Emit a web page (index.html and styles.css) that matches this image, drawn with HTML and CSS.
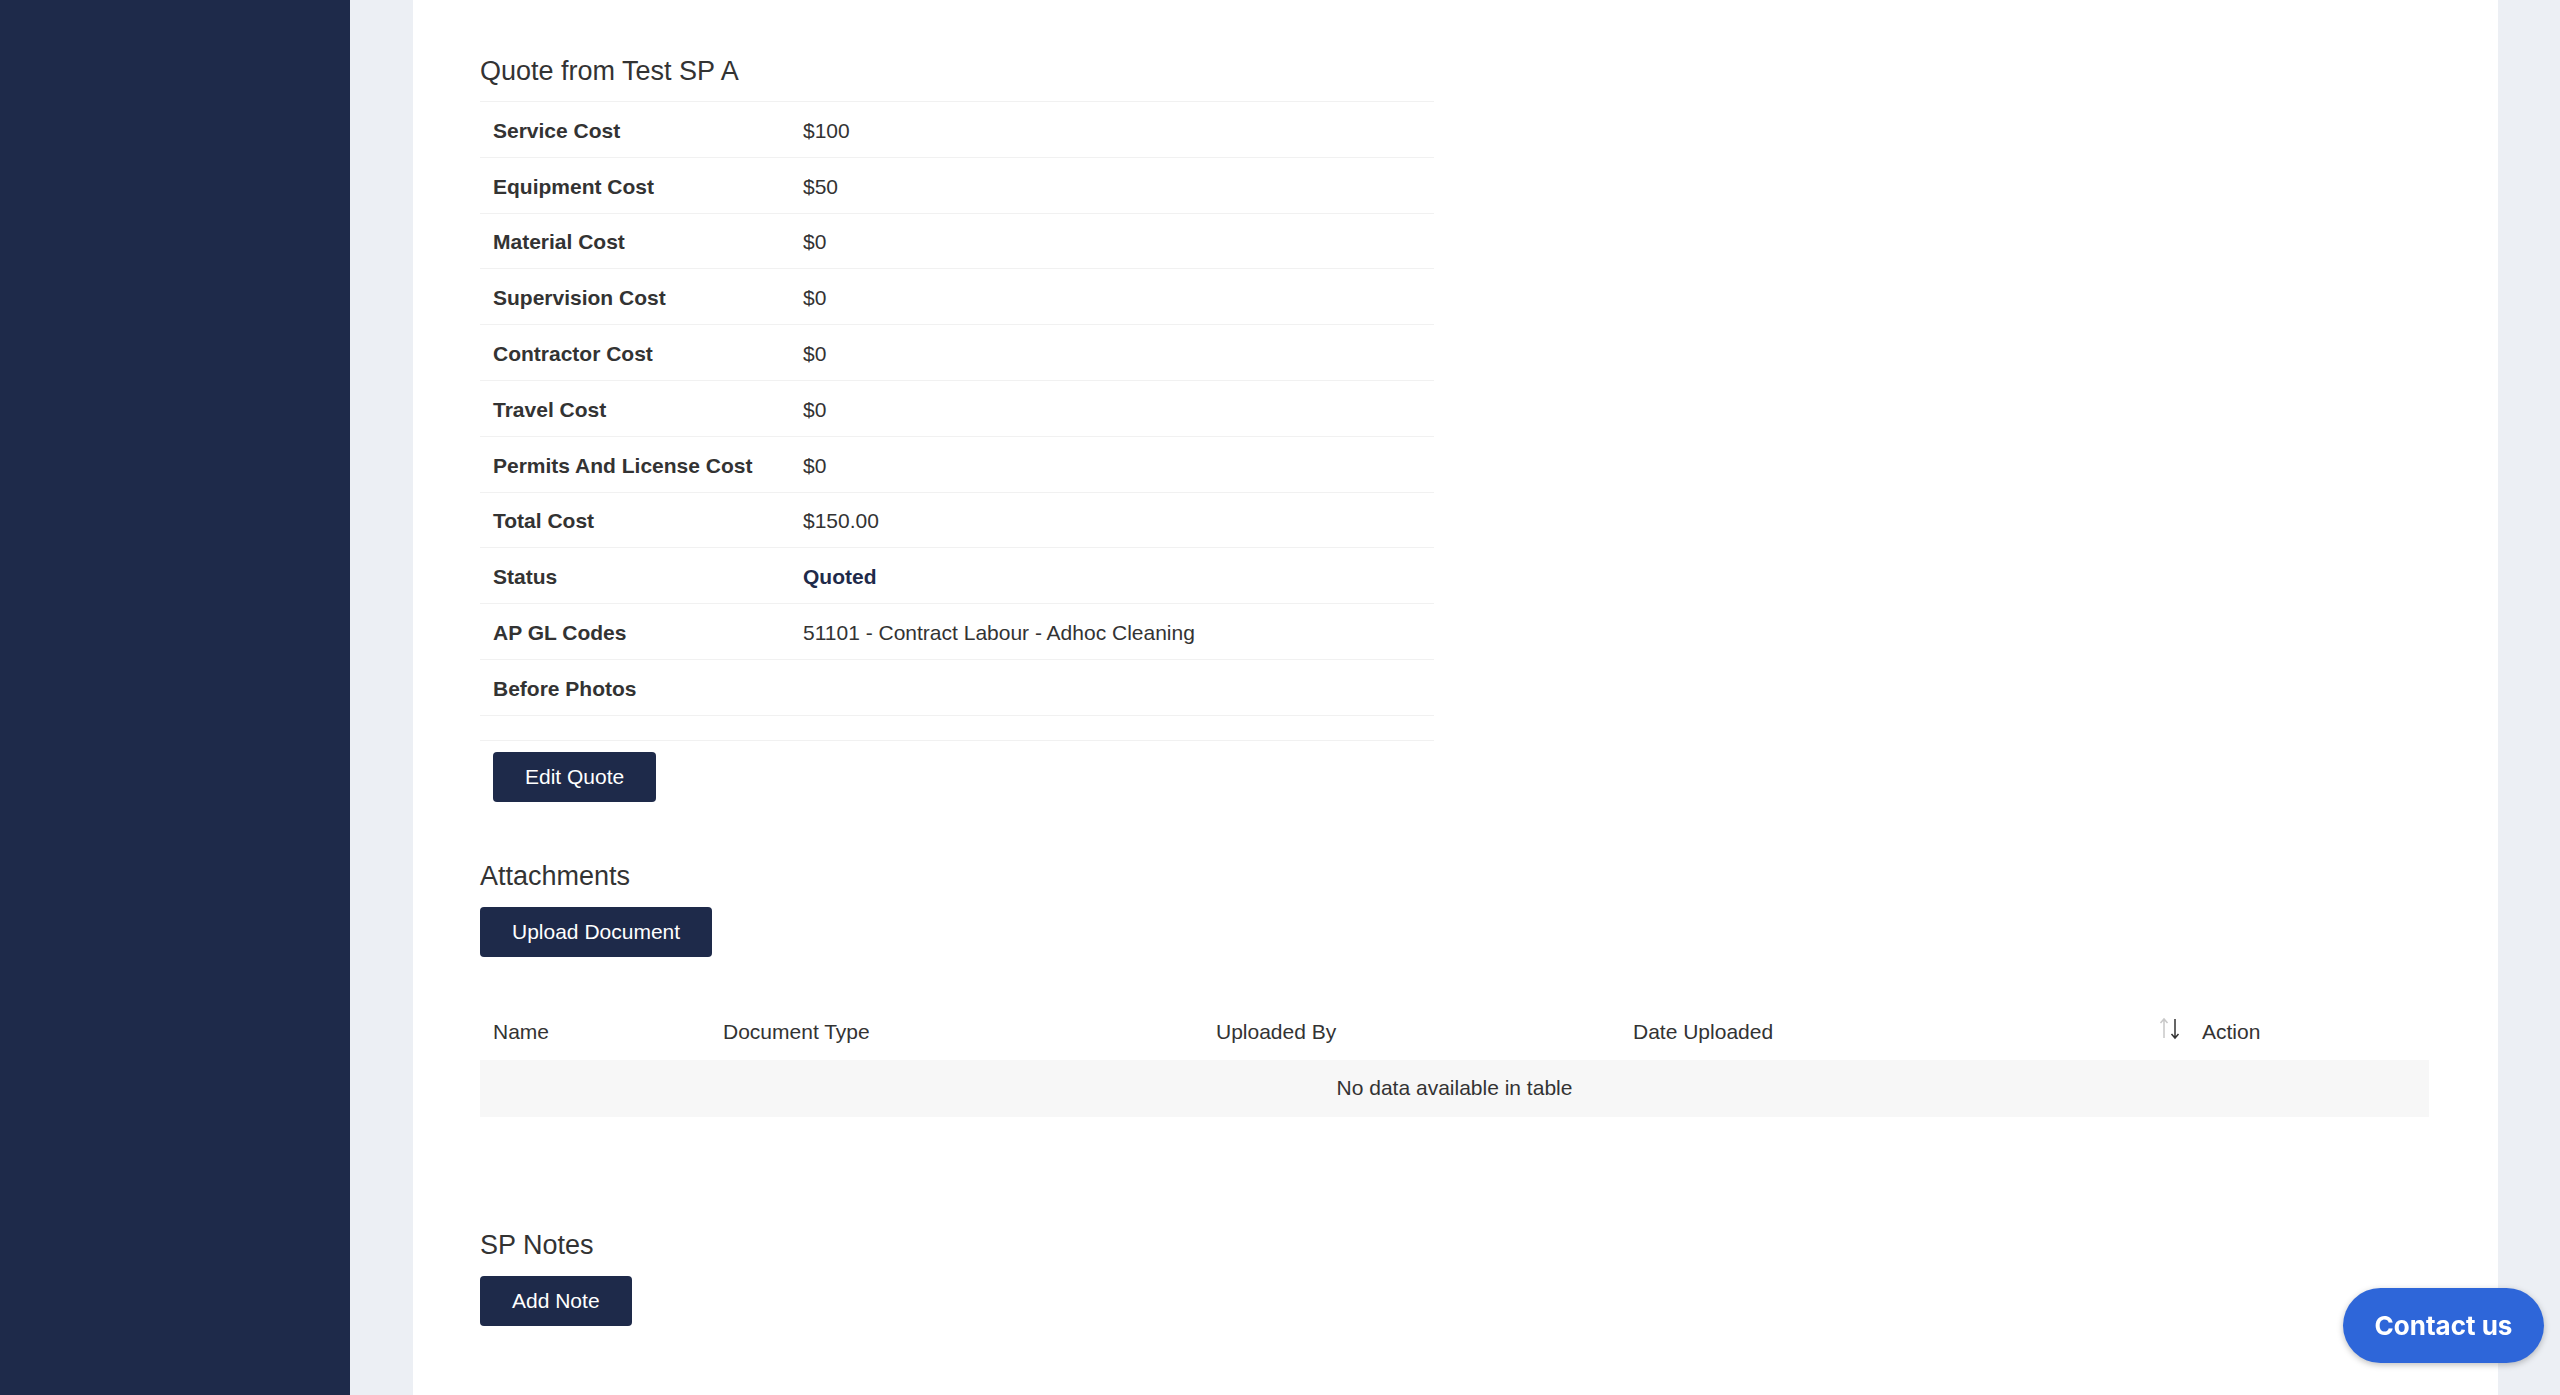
FILE: index.html
```html
<!DOCTYPE html>
<html lang="en">
<head>
    <meta charset="UTF-8">
    <meta name="viewport" content="width=device-width, initial-scale=1.0">
    <title>Quote Details</title>
    <link rel="stylesheet" href="styles.css">
</head>
<body>
    <div class="sidebar"></div>

    <div class="main">
        <div class="card">
            <h4 class="section-title first">Quote from Test SP A</h4>
            <table class="quote-table">
                <tr><td class="label">Service Cost</td><td>$100</td></tr>
                <tr><td class="label">Equipment Cost</td><td>$50</td></tr>
                <tr><td class="label">Material Cost</td><td>$0</td></tr>
                <tr><td class="label">Supervision Cost</td><td>$0</td></tr>
                <tr><td class="label">Contractor Cost</td><td>$0</td></tr>
                <tr><td class="label">Travel Cost</td><td>$0</td></tr>
                <tr><td class="label">Permits And License Cost</td><td>$0</td></tr>
                <tr><td class="label">Total Cost</td><td>$150.00</td></tr>
                <tr><td class="label">Status</td><td class="status">Quoted</td></tr>
                <tr><td class="label">AP GL Codes</td><td>51101 - Contract Labour - Adhoc Cleaning</td></tr>
                <tr><td class="label">Before Photos</td><td></td></tr>
                <tr class="spacer"><td></td><td></td></tr>
            </table>
            <button class="btn btn-edit">Edit Quote</button>

            <h4 class="section-title attach">Attachments</h4>
            <button class="btn">Upload Document</button>

            <table class="docs-table">
                <thead>
                    <tr>
                        <th class="col-name">Name</th>
                        <th class="col-type">Document Type</th>
                        <th class="col-by">Uploaded By</th>
                        <th class="col-date">Date Uploaded
                            <svg class="sort-icon" width="22" height="26" viewBox="0 0 22 26">
                                <path d="M5 22V3M1.5 7L5 3l3.5 4" fill="none" stroke="#c8c8c8" stroke-width="1.5"/>
                                <path d="M16 3v19M12.5 18l3.5 4 3.5-4" fill="none" stroke="#333" stroke-width="1.5"/>
                            </svg>
                        </th>
                        <th class="col-action">Action</th>
                    </tr>
                </thead>
                <tbody>
                    <tr><td class="empty" colspan="5">No data available in table</td></tr>
                </tbody>
            </table>

            <h4 class="section-title notes">SP Notes</h4>
            <button class="btn">Add Note</button>
        </div>
    </div>

    <button class="contact">Contact us</button>
</body>
</html>
```

FILE: styles.css
```css
body {
    margin: 0;
    display: flex;
    height: 100vh;
    overflow: hidden;
    font-family: "Liberation Sans", Arial, Helvetica, sans-serif;
    font-size: 21px;
    color: #333;
    background-color: #eceff4;
}

.sidebar {
    width: 350px;
    flex-shrink: 0;
    background-color: #1e2a4a;
}

.main {
    flex: 1;
    padding: 0 62px 0 63px;
}

.card {
    background-color: #fff;
    height: 100%;
    padding: 0 69px 0 67px;
    box-sizing: border-box;
}

.section-title {
    margin: 0;
    font-size: 27px;
    font-weight: normal;
    line-height: 32px;
    color: #333;
}

.first {
    padding-top: 55px;
}

.attach {
    margin-top: 58px;
    margin-bottom: 15px;
}

.notes {
    margin-top: 112px;
    margin-bottom: 15px;
}

table {
    border-collapse: collapse;
}

.quote-table {
    width: 954px;
    margin-top: 14px;
    table-layout: fixed;
}

.quote-table tr {
    height: 55.8px;
    border-top: 1px solid #f1f1f1;
}

.quote-table tr.spacer {
    height: 25px;
    border-bottom: 1px solid #f1f1f1;
}

.quote-table td {
    padding: 3px 13px 0;
}

.quote-table td.label {
    width: 284px;
    font-weight: bold;
}

.status {
    font-weight: bold;
    color: #1e2a4a;
}

.btn {
    display: block;
    height: 50px;
    padding: 0 32px;
    border: none;
    border-radius: 4px;
    background-color: #1e2a4a;
    color: #fff;
    font-family: "Liberation Sans", Arial, Helvetica, sans-serif;
    font-size: 21px;
    cursor: pointer;
}

.btn-edit {
    margin: 11px 0 0 13px;
}

.docs-table {
    width: 1949px;
    margin-top: 49px;
}

.docs-table th {
    height: 53px;
    padding: 0 13px 1px;
    text-align: left;
    font-weight: normal;
    position: relative;
}

.col-name { width: 204px; }
.col-type { width: 467px; }
.col-by { width: 391px; }
.col-date { width: 543px; }

.sort-icon {
    position: absolute;
    right: 8px;
    top: 10px;
}

.empty {
    height: 55px;
    text-align: center;
    background-color: #f7f7f7;
}

.contact {
    position: fixed;
    right: 16px;
    bottom: 32px;
    width: 201px;
    height: 75px;
    border: none;
    border-radius: 38px;
    background-color: #2e66d9;
    color: #fff;
    font-family: Inter, "Liberation Sans", sans-serif;
    font-size: 26px;
    font-weight: 700;
    box-shadow: 0 2px 6px rgba(0, 0, 0, 0.25);
    cursor: pointer;
}
```
